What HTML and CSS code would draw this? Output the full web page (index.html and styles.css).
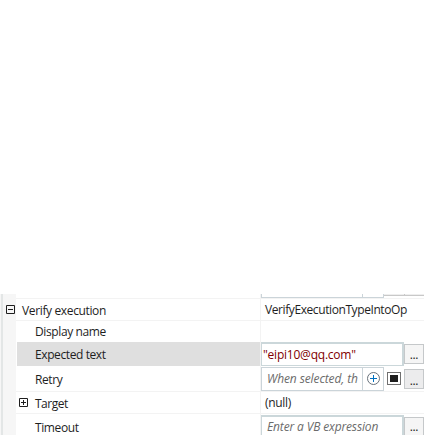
FILE: index.html
```
<!DOCTYPE html>
<html lang="en">
<head>
<meta charset="utf-8">
<title>Properties</title>
<link rel="stylesheet" href="styles.css">
</head>
<body>
<main class="panel">
  <div class="gutter"></div>
  <div class="rows">
    <div class="row partial"><div class="name"></div><div class="value"><span class="cut-input"></span><span class="cut-buttons"></span></div></div>
    <div class="row group"><svg class="toggle" viewBox="0 0 9 9"><path d="M.5.5h8v8h-8zM2 4.5h5"/></svg><div class="name"><span class="t1">Verify execution</span></div><div class="value text"><span class="t2">VerifyExecutionTypeIntoOp</span></div></div>
    <div class="row display"><div class="name"><span class="t3">Display name</span></div><div class="value"></div></div>
    <div class="row selected"><div class="name"><span class="t4">Expected text</span></div><div class="value"><div class="field"><span class="t5">"eipi10@qq.com"</span></div><button class="more">...</button></div></div>
    <div class="row retry"><div class="name"><span class="t6">Retry</span></div><div class="value"><div class="combo"><span class="hint t7">When selected, th</span><span class="add"><svg viewBox="0 0 15 15"><circle cx="7.5" cy="7.5" r="6"/><path d="M4 7.5h7M7.5 4v7"/></svg></span></div><span class="check"></span><button class="more dark">...</button></div></div>
    <div class="row target"><svg class="toggle" viewBox="0 0 9 9"><path d="M.5.5h8v8h-8zM2 4.5h5M4.5 2v5"/></svg><div class="name"><span class="t8">Target</span></div><div class="value text"><span class="t9">(null)</span></div></div>
    <div class="row timeout"><div class="name"><span class="t10">Timeout</span></div><div class="value"><div class="field"><span class="hint t11">Enter a VB expression</span></div><button class="more">...</button></div></div>
  </div>
</main>
</body>
</html>
```
FILE: styles.css
```
* { box-sizing: border-box; }
body { margin: 0; height: 435px; overflow: hidden; background: #fff; color: #1e1e1e; font: 12px/16px "Open Sans", "Noto Sans", sans-serif; }
.panel { display: flex; height: 141px; margin-top: 294px; }
.gutter { width: 16px; flex: none; background: #f6f6f6; border-left: 1px solid #f6f6f6; box-shadow: inset 2px 0 #e3e6e6; }
.rows { flex: 1; min-width: 0; }
.row { position: relative; display: flex; border-bottom: 1px solid #f3f3f3; }
.name { width: 245px; flex: none; padding: 2px 0 0 19px; border-right: 1px solid #f3f3f3; display: flex; align-items: center; white-space: nowrap; }
.value { width: 163px; display: flex; align-items: center; white-space: nowrap; }
.text { padding: 1px 0 0 4px; }
.partial { height: 5px; }
.partial .value { align-items: flex-start; }
.cut-input { width: 123px; height: 4px; border: 1px solid #cbd4d9; border-top: 0; background: linear-gradient(#cbd4d9, #cbd4d9) 100px 0 / 1px 100% no-repeat; }
.cut-buttons { width: 40px; height: 2px; border-bottom: 1px solid #c8c8c8; background: linear-gradient(#c8c8c8, #c8c8c8) 20px 0 / 1px 100% no-repeat #eee; }
.group { height: 22px; }
.group .name { padding-left: 6px; }
.display { height: 21px; border-bottom: 0; }
.display .name { padding-top: 0; }
.selected { height: 24px; border-bottom: 0; }
.selected .name { background: #dfdfdf; border-left: 1px solid #fff; padding-left: 18px; }
.retry { height: 26px; }
.target { height: 22px; }
.timeout { height: 26px; }
.toggle { position: absolute; width: 9px; height: 9px; fill: none; stroke: #1e1e1e; }
.group .toggle { left: -10px; top: 6px; }
.target .toggle { left: 3px; top: 6px; }
.field { width: 143px; height: 24px; padding-left: 1px; border: solid #cbd7da; border-width: 2px 2px 1px 1px; display: flex; align-items: center; background: #fff; color: #800000; }
.more { width: 20px; height: 20px; padding: 1px 0 0; border: 1px solid #c5c8ca; background: #f5f5f5; font: 12px/14px "Open Sans", sans-serif; color: #1e1e1e; letter-spacing: -.4px; }
.dark { background: #ececed; padding-top: 4px; }
.combo { width: 123px; height: 24px; border: 1px solid #cbd4d9; display: flex; align-items: center; }
.hint { font-style: italic; color: #6b6b6b; }
.combo .hint { width: 100px; padding-left: 5px; overflow: hidden; }
.add { width: 21px; height: 22px; border-left: 1px solid #cbd4d9; display: flex; align-items: center; justify-content: center; }
.add svg { width: 15px; height: 15px; fill: none; stroke: #68717a; }
.add path { stroke: #0070c0; }
.check { width: 14px; height: 13px; margin: 0 3px; border: 1px solid #707070; background: #1e1e1e; background-clip: content-box; padding: 2px; }
.timeout .hint { padding-left: 4px; }
.t1 { letter-spacing: -.36px; }
.t2 { letter-spacing: -.41px; }
.t3 { letter-spacing: -.38px; }
.t4 { letter-spacing: -.4px; }
.t5 { letter-spacing: -.22px; }
.t6 { letter-spacing: -.4px; }
.t7 { letter-spacing: -.1px; }
.t8 { letter-spacing: -.5px; }
.t9 { letter-spacing: -.3px; }
.t10 { letter-spacing: -.4px; }
.t11 { letter-spacing: -.14px; }
```
